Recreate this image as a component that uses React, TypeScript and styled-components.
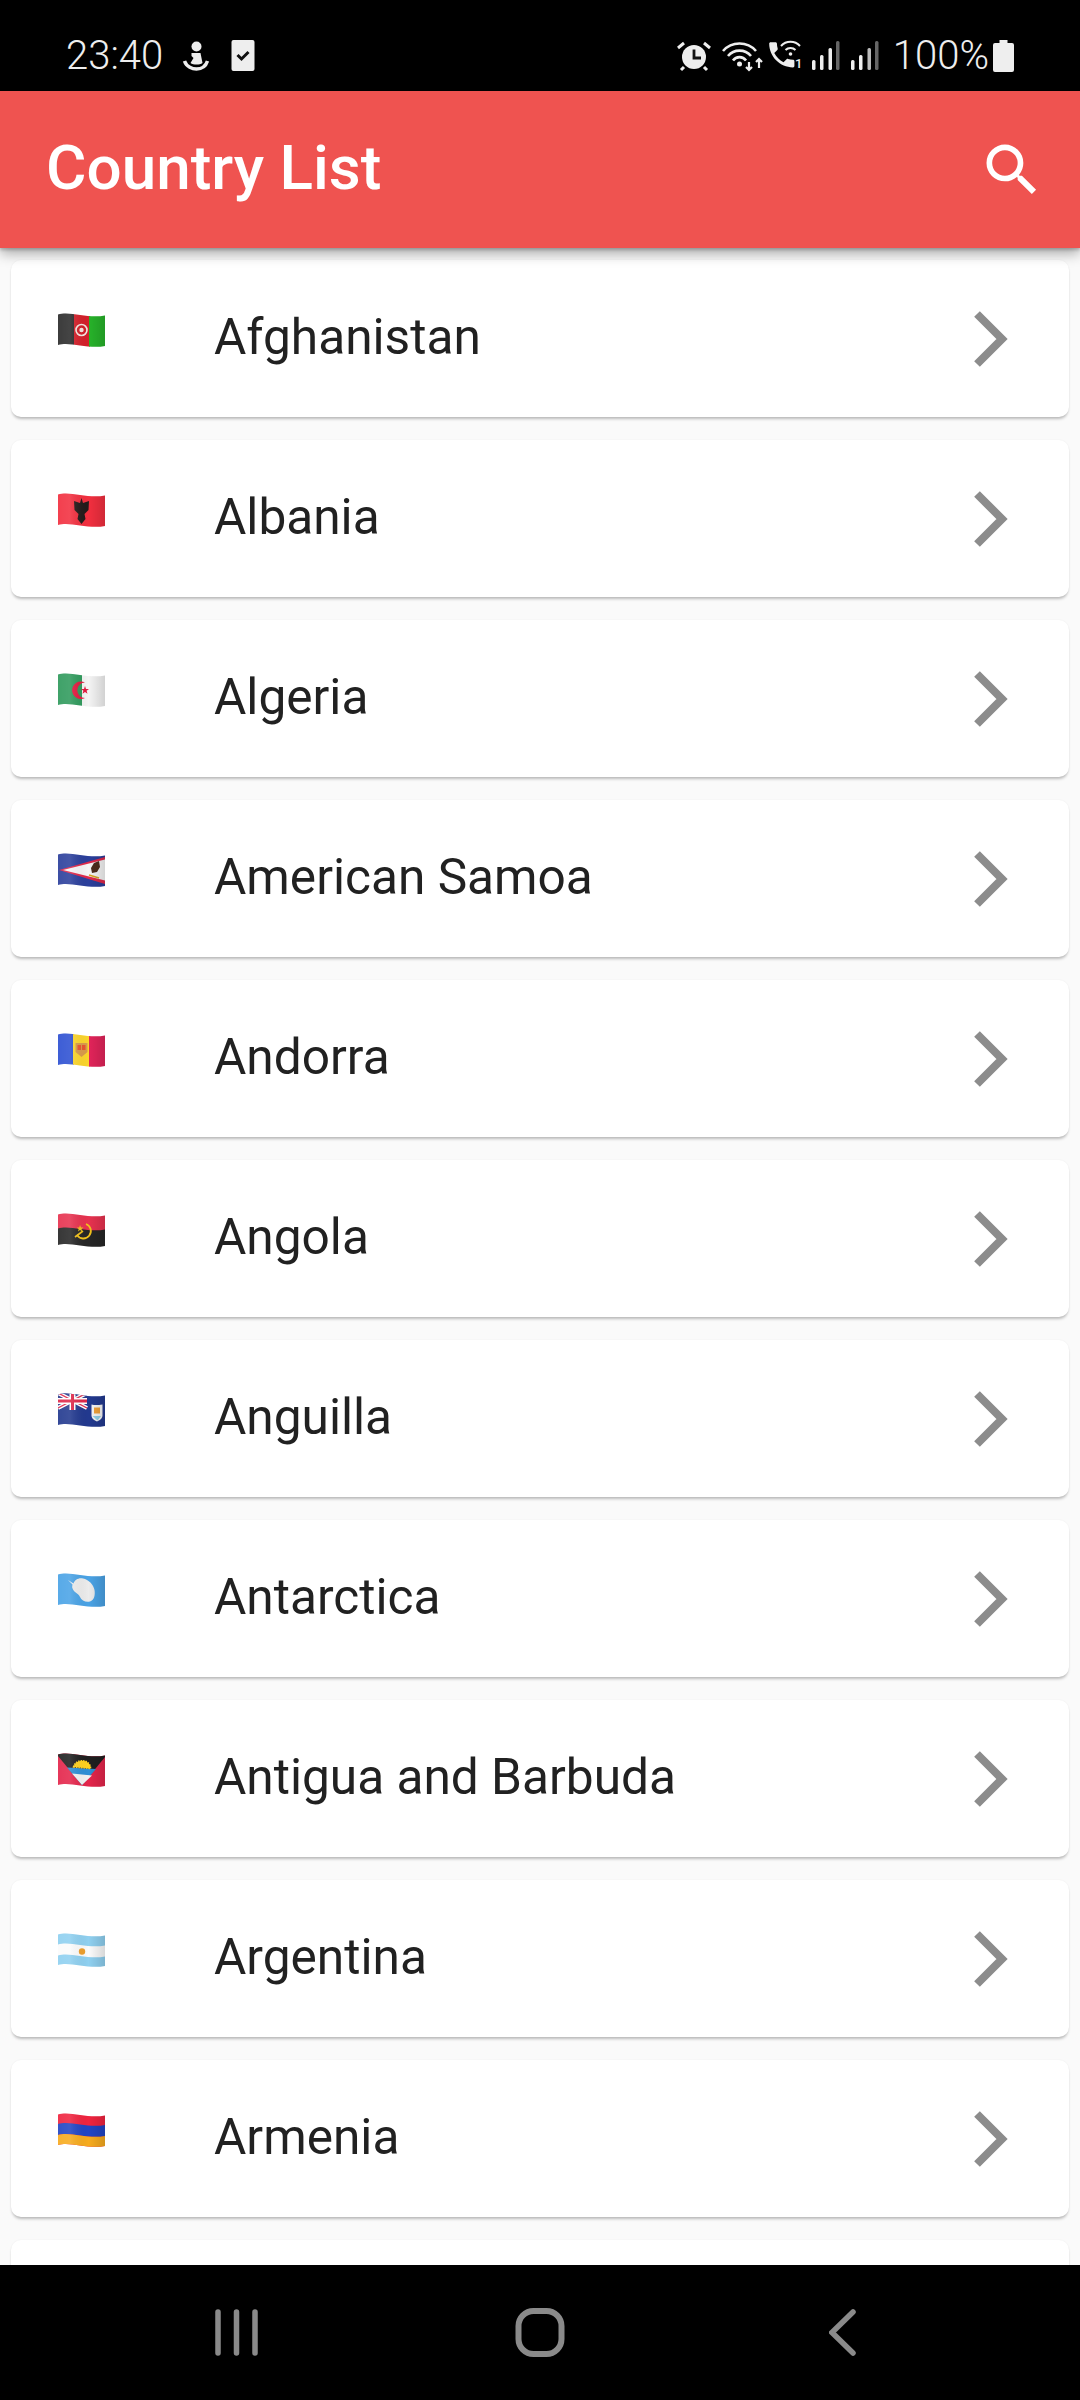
import React, { useId } from 'react';
import styled, { createGlobalStyle } from 'styled-components';
import { MdSearch } from 'react-icons/md';

// follows the cloth wave of the flag, so stripes bend with it
const band = (y0: number, y1: number) =>
  `M0 ${y0}C12 ${y0 - 4} 30 ${y0 + 4.5} 47 ${y0 + 1}V${y1 + 1}C30 ${y1 + 4.5} 12 ${y1 - 4} 0 ${y1}Z`;

const UnionJack = () => (
  <g>
    <path d="M0 0h29v17H0z" fill="#2b3a8c" />
    <path d="M0 1l29 15M29 1L0 16" stroke="#fff" strokeWidth="4" />
    <path d="M0 1l29 15M29 1L0 16" stroke="#e0284a" strokeWidth="1.4" />
    <path d="M14.5 0v18M0 9h29" stroke="#fff" strokeWidth="6" />
    <path d="M14.5 0v18M0 9h29" stroke="#e0284a" strokeWidth="3" />
  </g>
);

const countries: { name: string; flag: React.ReactNode }[] = [
  {
    name: 'Afghanistan',
    flag: (
      <>
        <rect width="16" height="36" fill="#2b2b2b" />
        <rect x="16" width="16" height="36" fill="#d3202a" />
        <rect x="31" width="16" height="36" fill="#27b32a" />
        <circle cx="23.5" cy="18" r="5.5" fill="none" stroke="#f5e6e0" strokeWidth="1.6" />
        <circle cx="23.5" cy="18" r="2.2" fill="#f5e6e0" />
      </>
    ),
  },
  {
    name: 'Albania',
    flag: (
      <>
        <rect width="47" height="36" fill="#f22f3f" />
        <path d="M16 9l6 2 1.500-5 1.500 5 6-2-.5 9-4 4 1 5-4 5-4-5 1-5-4-4z" fill="#241a1a" />
      </>
    ),
  },
  {
    name: 'Algeria',
    flag: (
      <>
        <rect width="24" height="36" fill="#2f9a5c" />
        <rect x="24" width="23" height="36" fill="#f4f4f4" />
        <path d="M27 10.500a8.800 8.800 0 1 0 0 15.500a7 7 0 1 1 0-15.500z" fill="#e3193f" />
        <path d="M27 14l1 2.900h3l-2.400 1.900.9 3-2.500-1.800-2.500 1.800.9-3-2.400-1.900h3z" fill="#e3193f" />
      </>
    ),
  },
  {
    name: 'American Samoa',
    flag: (
      <>
        <rect width="47" height="36" fill="#2b3f9c" />
        <path d="M1 18L47 5v27z" fill="#e0284a" />
        <path d="M5 18L47 7.500v21z" fill="#f5f5f5" />
        <path d="M36 11l5-2 1 6-3 5-5 1-1-5z" fill="#4d2c1c" />
        <path d="M31 23l10 3" stroke="#d9a520" strokeWidth="1.6" />
      </>
    ),
  },
  {
    name: 'Andorra',
    flag: (
      <>
        <rect width="16" height="36" fill="#2d50d2" />
        <rect x="15" width="17" height="36" fill="#fbd52c" />
        <rect x="31" width="16" height="36" fill="#e2245a" />
        <path d="M17.500 11h12v9l-6 5-6-5z" fill="#d99a4a" />
        <path d="M19.500 13h3.500v5h-3.500zM24 13h3.500v5H24z" fill="#e8552f" />
      </>
    ),
  },
  {
    name: 'Angola',
    flag: (
      <>
        <path d="M0 0h47v20H0z" fill="#e7324f" />
        <path d={band(16.5, 36)} fill="#262626" />
        <path d="M28 12a7.500 7.500 0 1 1-9 11" fill="none" stroke="#f2c21b" strokeWidth="1.800" />
        <path d="M17 25l8-6" stroke="#f2c21b" strokeWidth="1.600" />
        <path d="M22 13l1 2.500h2.500l-2 1.500.8 2.500-2.300-1.500-2 1.500.7-2.500-2-1.500h2.500z" fill="#f2c21b" />
      </>
    ),
  },
  {
    name: 'Anguilla',
    flag: (
      <>
        <rect width="47" height="36" fill="#22398f" />
        <UnionJack />
        <path d="M33.500 12.500c3 .8 6 .8 11 0v11c0 3-3 5-5.500 6-2.500-1-5.500-3-5.500-6z" fill="#f6f6f6" />
        <path d="M36 15.500h6v6h-6z" fill="#f1a23a" />
        <path d="M34.500 24h8.500l-3.500 4.500z" fill="#8fd0ea" />
      </>
    ),
  },
  {
    name: 'Antarctica',
    flag: (
      <>
        <rect width="47" height="36" fill="#4aa3e6" />
        <path
          d="M10 8l5.500 3.500c1-3.500 5-6 9.500-5 5.500 1 10.500 6 11.500 11.500.8 4.500 0 10-4.500 11.500-4 1.300-8.500-1-10-4.500-1.500-3.500-5-4-7-7.500-1.500-2.500-.5-4-.5-5z"
          fill="#ececec"
        />
      </>
    ),
  },
  {
    name: 'Antigua and Barbuda',
    flag: (
      <>
        <rect width="47" height="36" fill="#e4254b" />
        <path d="M0 0h47v5L24 33 0 4z" fill="#1f1f1f" />
        <path d="M9 15.500l29 1.500L24 33z" fill="#2e8fd6" />
        <path d="M14 21.500l20 2L24 33z" fill="#f2f2f2" />
        <path
          d="M15.500 15a8.500 7 0 0 1 17 1.500z"
          fill="#ffd21f"
          stroke="#ffd21f"
          strokeWidth="1.500"
          strokeDasharray="1.500 1"
        />
      </>
    ),
  },
  {
    name: 'Argentina',
    flag: (
      <>
        <rect width="47" height="36" fill="#8fd0f0" />
        <path d={band(12.5, 23.5)} fill="#fbfbfb" />
        <circle cx="24" cy="19.500" r="3.200" fill="#ee9f2d" />
      </>
    ),
  },
  {
    name: 'Armenia',
    flag: (
      <>
        <rect width="47" height="36" fill="#f0243f" />
        <path d={band(12, 23)} fill="#2145c4" />
        <path d={band(23, 36)} fill="#f7ab1e" />
      </>
    ),
  },
  { name: '', flag: null },
];

const Flag = ({ children }: { children: React.ReactNode }) => {
  const id = useId();
  return (
    <FlagSvg viewBox="0 0 47 36">
      <defs>
        <clipPath id={`${id}c`}>
          <path d={band(2.5, 33)} />
        </clipPath>
        <linearGradient id={`${id}g`}>
          <stop offset="0" stopColor="#fff" stopOpacity=".08" />
          <stop offset=".25" stopColor="#fff" stopOpacity=".12" />
          <stop offset=".65" stopColor="#000" stopOpacity="0" />
          <stop offset="1" stopColor="#000" stopOpacity=".14" />
        </linearGradient>
      </defs>
      <g clipPath={`url(#${id}c)`}>
        {children}
        <rect width="47" height="36" fill={`url(#${id}g)`} />
      </g>
    </FlagSvg>
  );
};

const SignalBars = ({ third, fourth }: { third: string; fourth: string }) => (
  <StatusIcon $w={28} $h={29} $gap={11} viewBox="0 0 28 29">
    <rect x="0" y="19" width="3.500" height="10" rx="1.500" fill="#eee" />
    <rect x="8" y="14" width="3.500" height="15" rx="1.500" fill="#eee" />
    <rect x="16.500" y="7" width="3.500" height="22" rx="1.500" fill={third} />
    <rect x="24" y="0" width="3.500" height="29" rx="1.500" fill={fourth} />
  </StatusIcon>
);

const StatusBar = () => (
  <StatusRow>
    <StatusGroup>
      <Clock>23:40</Clock>
      <StatusIcon $w={26} $h={30} $gap={22} viewBox="0 0 25 30">
        <circle cx="13" cy="5.500" r="5" fill="#eee" />
        <path d="M8 12h9l2 10c-3 2-9 2-12 0l3-5-2-2z" fill="#eee" />
        <path d="M1 20c2 6 8 8 12 8s9-2 11-8" fill="none" stroke="#eee" strokeWidth="3.500" />
      </StatusIcon>
      <StatusIcon $w={24} $h={31} viewBox="0 0 23 31">
        <rect width="23" height="31" rx="2" fill="#eee" />
        <path d="M6 15l4 4 7-7" fill="none" stroke="#111" strokeWidth="3" />
      </StatusIcon>
    </StatusGroup>
    <StatusGroup>
      <StatusIcon $w={34} $h={30} $gap={11} viewBox="0 0 34 30">
        <circle cx="17" cy="16" r="12" fill="#eee" />
        <path d="M17 8.500V17h7" fill="none" stroke="#111" strokeWidth="2.800" />
        <path d="M1 7l6-5M33 7l-6-5M4 29l3-3M30 29l-3-3" stroke="#eee" strokeWidth="3" />
      </StatusIcon>
      <StatusIcon $w={42} $h={31} $gap={4} viewBox="0 0 42 31">
        <g fill="none" stroke="#eee" strokeWidth="2.600">
          <path d="M1 11a22 22 0 0 1 33 0" />
          <path d="M6 16a15 15 0 0 1 23 0" />
          <path d="M11 20.500a8 8 0 0 1 13 0" />
        </g>
        <circle cx="17.500" cy="24" r="2.500" fill="#eee" />
        <path d="M27 22v8M24 27l3 3 3-3M37 28v-9M34 22l3-3 3 3" fill="none" stroke="#eee" strokeWidth="2.200" />
      </StatusIcon>
      <StatusIcon $w={36} $h={29} $gap={8} viewBox="0 0 36 29">
        <path
          transform="translate(-3 -3) scale(1.400)"
          d="M6.620 10.790c1.440 2.830 3.760 5.140 6.590 6.590l2.200-2.200c.27-.27.67-.36 1.020-.24 1.120.37 2.330.57 3.570.57.55 0 1 .45 1 1V20c0 .55-.45 1-1 1-9.390 0-17-7.610-17-17 0-.55.45-1 1-1h3.500c.55 0 1 .45 1 1 0 1.250.2 2.450.57 3.570.11.35.03.74-.25 1.020l-2.200 2.200z"
          fill="#eee"
        />
        <g fill="none" stroke="#eee" strokeWidth="2">
          <path d="M13 5a13 13 0 0 1 19 0" />
          <path d="M17.500 9a7 7 0 0 1 10 0" />
        </g>
        <circle cx="22.500" cy="13" r="1.800" fill="#eee" />
        <SmallDigit x="27" y="27">1</SmallDigit>
      </StatusIcon>
      <SignalBars third="#eee" fourth="#666" />
      <SignalBars third="#bbb" fourth="#666" />
      <Battery>100%</Battery>
      <StatusIcon $w={21} $h={32} viewBox="0 0 21 32">
        <path d="M6.500 0h8v3h4.500a2 2 0 0 1 2 2v25a2 2 0 0 1-2 2H2a2 2 0 0 1-2-2V5a2 2 0 0 1 2-2h4.500z" fill="#eee" />
      </StatusIcon>
    </StatusGroup>
  </StatusRow>
);

const App = () => {
  return (
    <Screen>
      <GlobalStyle />
      <StatusBar />
      <AppBar>
        <Title>Country List</Title>
        <SearchIcon />
      </AppBar>
      <List>
        {countries.map((country) => (
          <CountryCard key={country.name}>
            <FlagSlot>{country.flag && <Flag>{country.flag}</Flag>}</FlagSlot>
            <CountryName>{country.name}</CountryName>
            <Chevron viewBox="0 0 34 56">
              <path d="M3 3l25 25L3 53" fill="none" stroke="#8c8c8c" strokeWidth="8" />
            </Chevron>
          </CountryCard>
        ))}
      </List>
      <NavBar>
        <NavSlot>
          <NavIcon $w={43} viewBox="0 0 43 47">
            <path d="M3 3v41M21.500 3v41M40 3v41" stroke="#8a8a8a" strokeWidth="5.500" strokeLinecap="round" />
          </NavIcon>
        </NavSlot>
        <NavSlot>
          <NavIcon $w={50} viewBox="0 0 50 49">
            <rect x="3.500" y="3" width="43" height="43" rx="15" fill="none" stroke="#8a8a8a" strokeWidth="6" />
          </NavIcon>
        </NavSlot>
        <NavSlot>
          <NavIcon $w={27} viewBox="0 0 27 47">
            <path d="M24 3L3 23.500 24 44" fill="none" stroke="#8a8a8a" strokeWidth="5.500" strokeLinecap="round" />
          </NavIcon>
        </NavSlot>
      </NavBar>
    </Screen>
  );
};

export default App;

const GlobalStyle = createGlobalStyle`
  html, body {
    margin: 0;
    padding: 0;
    background: #fafafa;
  }
`;

const Screen = styled.div`
  position: relative;
  width: 1080px;
  height: 2400px;
  overflow: hidden;
  display: flex;
  flex-direction: column;
  background: #fafafa;
  font-family: Roboto, 'Liberation Sans', sans-serif;
`;

const StatusRow = styled.div`
  height: 91px;
  flex-shrink: 0;
  box-sizing: border-box;
  padding: 20px 66px 0 66px;
  display: flex;
  align-items: center;
  justify-content: space-between;
  background: #000;
  color: #eee;
`;

const StatusGroup = styled.div`
  display: flex;
  align-items: center;
`;

const StatusIcon = styled.svg<{ $w: number; $h: number; $gap?: number }>`
  width: ${(props) => props.$w}px;
  height: ${(props) => props.$h}px;
  margin-right: ${(props) => props.$gap || 0}px;
  flex-shrink: 0;
  overflow: visible;
`;

const SmallDigit = styled.text`
  font-size: 13px;
  font-weight: 500;
  fill: #eee;
`;

const Clock = styled.span`
  font-size: 40px;
  font-weight: 300;
  margin-right: 20px;
  line-height: 44px;
`;

const Battery = styled.span`
  font-size: 40px;
  font-weight: 300;
  margin: 0 4px 0 3px;
  line-height: 44px;
`;

const AppBar = styled.header`
  position: relative;
  z-index: 2;
  height: 157px;
  flex-shrink: 0;
  box-sizing: border-box;
  padding: 0 34px 0 46px;
  display: flex;
  align-items: center;
  justify-content: space-between;
  background: #ef5350;
  box-shadow: 0 6px 12px rgba(0, 0, 0, 0.3), 0 2px 3px rgba(0, 0, 0, 0.2);
`;

const Title = styled.h1`
  margin: 0 0 3px;
  font-size: 62px;
  font-weight: 500;
  line-height: 70px;
  color: #fff;
`;

const SearchIcon = styled(MdSearch)`
  width: 68px;
  height: 68px;
  color: #fff;
`;

const List = styled.main`
  flex: 1;
  min-height: 0;
  overflow: hidden;
  box-sizing: border-box;
  padding: 12px 11px 0;
  display: flex;
  flex-direction: column;
  gap: 23px;
`;

const CountryCard = styled.article`
  height: 157px;
  flex-shrink: 0;
  box-sizing: border-box;
  padding: 0 61px 0 47px;
  display: flex;
  align-items: center;
  background: #fff;
  border-radius: 10px;
  box-shadow: 0 3px 3px -1px rgba(0, 0, 0, 0.25), 0 0 2px rgba(0, 0, 0, 0.06);
`;

const FlagSlot = styled.div`
  width: 156px;
  height: 36px;
  margin-bottom: 17px;
  flex-shrink: 0;
`;

const FlagSvg = styled.svg`
  display: block;
  width: 47px;
  height: 36px;
  filter: blur(0.4px);
`;

const CountryName = styled.span`
  flex: 1;
  margin-bottom: 4px;
  font-size: 49.6px;
  line-height: 56px;
  color: #212121;
`;

const Chevron = styled.svg`
  width: 34px;
  height: 56px;
`;

const NavBar = styled.nav`
  position: relative;
  z-index: 2;
  height: 135px;
  flex-shrink: 0;
  box-sizing: border-box;
  padding-left: 85px;
  display: flex;
  background: #000;
`;

const NavSlot = styled.div`
  width: 303px;
  display: flex;
  align-items: center;
  justify-content: center;
`;

const NavIcon = styled.svg<{ $w: number }>`
  width: ${(props) => props.$w}px;
  height: auto;
`;
